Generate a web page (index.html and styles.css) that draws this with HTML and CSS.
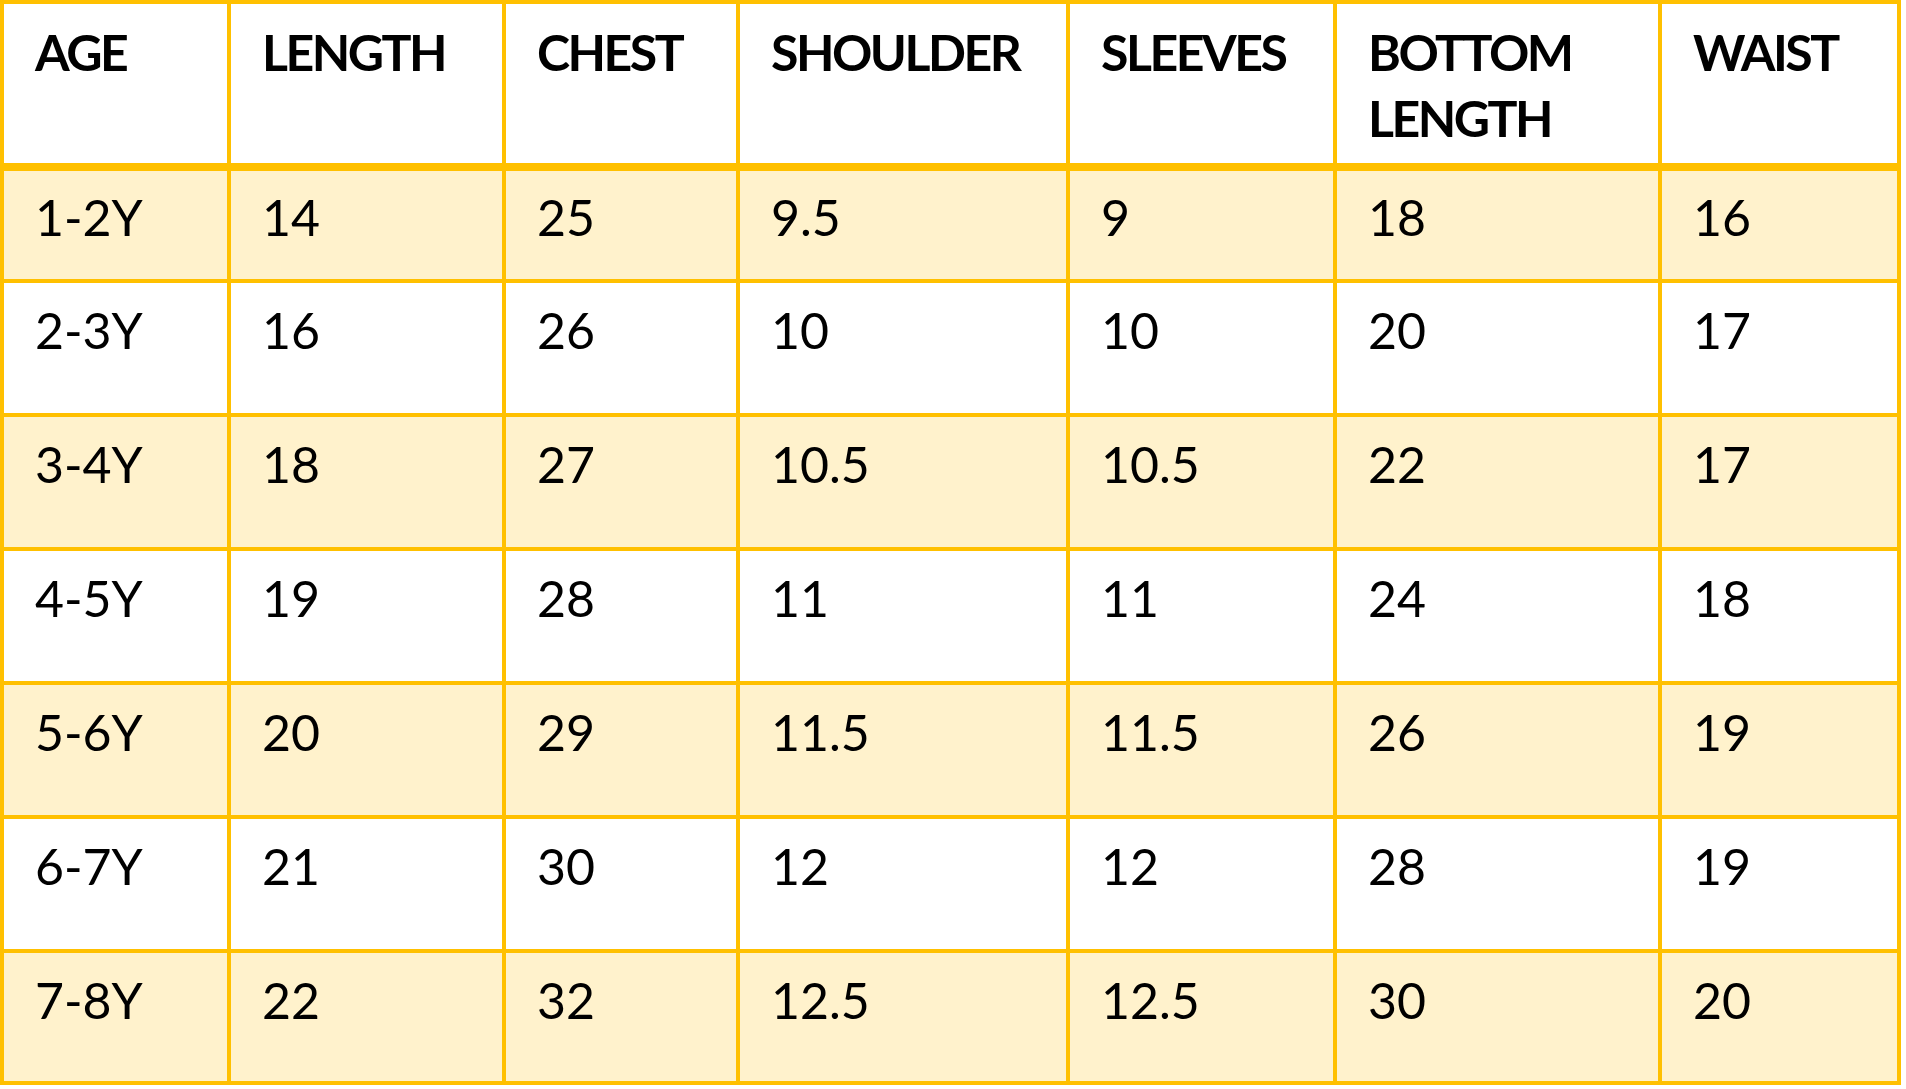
FILE: index.html
```
<!DOCTYPE html>
<html>
<head>
<meta charset="utf-8">
<link rel="stylesheet" href="styles.css">
</head>
<body>
<table class="size-table">
  <thead>
    <tr class="head-row">
      <th class="c1">AGE</th>
      <th class="c2">LENGTH</th>
      <th class="c3">CHEST</th>
      <th class="c4">SHOULDER</th>
      <th class="c5">SLEEVES</th>
      <th class="c6">BOTTOM<br>LENGTH</th>
      <th class="c7">WAIST</th>
    </tr>
  </thead>
  <tbody>
    <tr class="band first"><td>1-2Y</td><td>14</td><td>25</td><td>9.5</td><td>9</td><td>18</td><td>16</td></tr>
    <tr class="plain"><td>2-3Y</td><td>16</td><td>26</td><td>10</td><td>10</td><td>20</td><td>17</td></tr>
    <tr class="band"><td>3-4Y</td><td>18</td><td>27</td><td>10.5</td><td>10.5</td><td>22</td><td>17</td></tr>
    <tr class="plain"><td>4-5Y</td><td>19</td><td>28</td><td>11</td><td>11</td><td>24</td><td>18</td></tr>
    <tr class="band"><td>5-6Y</td><td>20</td><td>29</td><td>11.5</td><td>11.5</td><td>26</td><td>19</td></tr>
    <tr class="plain"><td>6-7Y</td><td>21</td><td>30</td><td>12</td><td>12</td><td>28</td><td>19</td></tr>
    <tr class="band last"><td>7-8Y</td><td>22</td><td>32</td><td>12.5</td><td>12.5</td><td>30</td><td>20</td></tr>
  </tbody>
</table>
</body>
</html>
```
FILE: styles.css
```
html, body {
  margin: 0;
  padding: 0;
  background: #ffffff;
}

.size-table {
  border-collapse: separate;
  border-spacing: 0;
  table-layout: fixed;
  width: 1901px;
  border-left: 4px solid #FFC000;
  border-top: 4px solid #FFC000;
  font-family: Lato, "Open Sans", sans-serif;
  color: #000000;
}

.size-table th,
.size-table td {
  box-sizing: border-box;
  border-right: 4px solid #FFC000;
  border-bottom: 4px solid #FFC000;
  padding: 14px 0 0 31px;
  vertical-align: top;
  text-align: left;
  font-size: 50px;
  line-height: 66px;
  white-space: nowrap;
}

.size-table th {
  font-weight: 700;
  letter-spacing: -2.5px;
  height: 167px;
  padding-top: 15px;
  border-bottom-width: 8px;
  background: #ffffff;
}

.size-table td {
  font-weight: 400;
  height: 134px;
}

.size-table .first td {
  height: 112px;
  padding-top: 13px;
}

.size-table .last td {
  height: 132px;
}

.band td {
  background: #FFF2CC;
}

.plain td {
  background: #ffffff;
}

.c1 { width: 227px; }
.c2 { width: 275px; }
.c3 { width: 234px; }
.c4 { width: 330px; }
.c5 { width: 267px; }
.c6 { width: 325px; }
.c7 { width: 239px; }
```
